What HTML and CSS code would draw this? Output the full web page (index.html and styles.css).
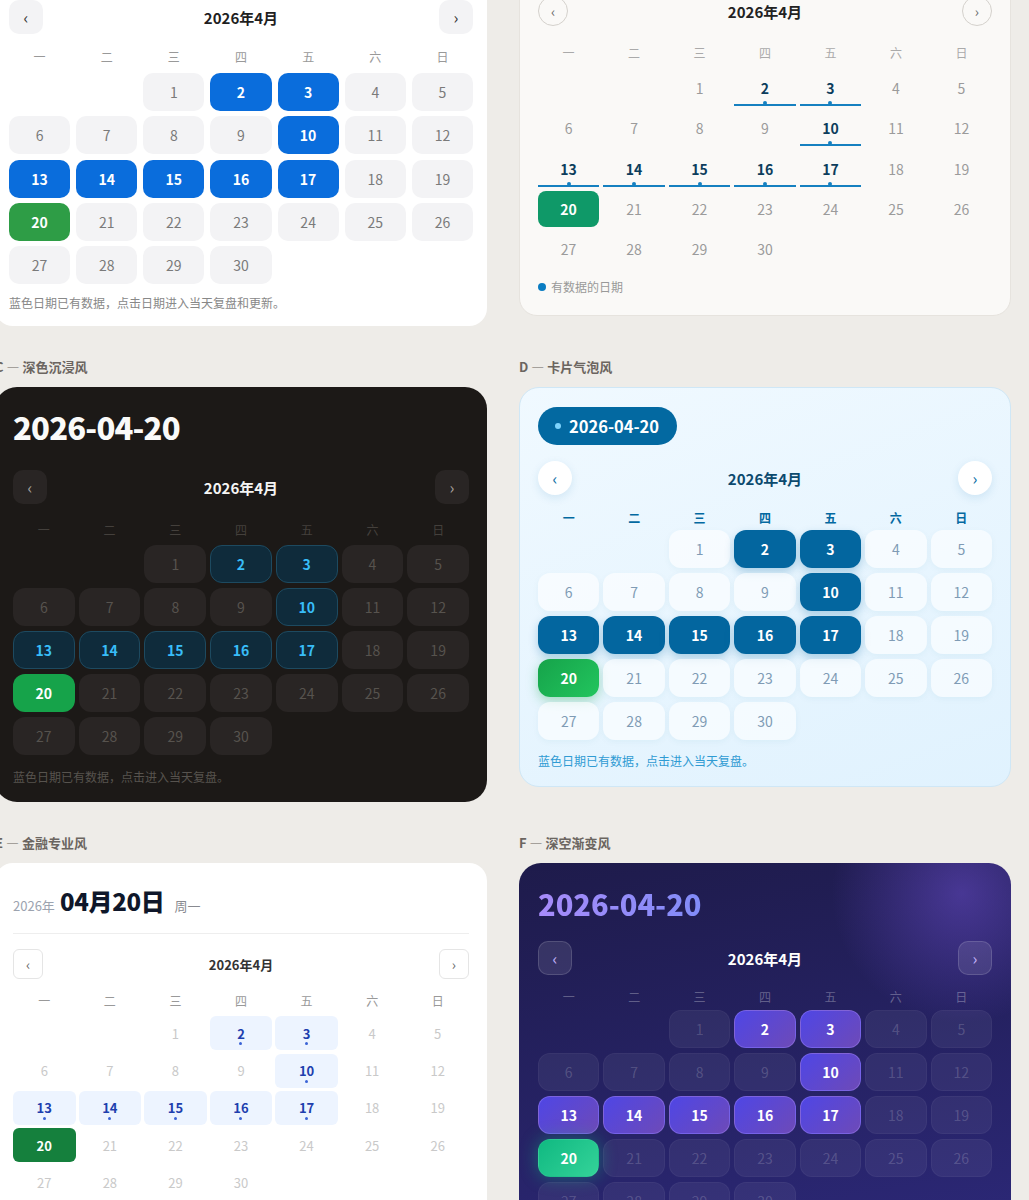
FILE: index.html
```html
<!DOCTYPE html>
<html lang="zh-CN">
<head>
    <meta charset="UTF-8">
    <meta name="viewport" content="width=device-width, initial-scale=1.0">
    <title>日历样式方案</title>
    <link rel="stylesheet" href="styles.css">
</head>
<body>
    <div class="page">
        <section class="demo">
            <div class="label">A — 简约卡片风</div>
            <div class="card cal-a">
                <div class="head"></div>
                <div class="nav"><button class="nav-btn">‹</button><span class="title">2026年4月</span><button class="nav-btn">›</button></div>
                <div class="week"><span>一</span><span>二</span><span>三</span><span>四</span><span>五</span><span>六</span><span>日</span></div>
                <div class="days"></div>
                <p class="note">蓝色日期已有数据，点击日期进入当天复盘和更新。</p>
            </div>
        </section>

        <section class="demo">
            <div class="label">B — 杂志线条风</div>
            <div class="card cal-b">
                <div class="head"></div>
                <div class="nav"><button class="nav-btn">‹</button><span class="title">2026年4月</span><button class="nav-btn">›</button></div>
                <div class="week"><span>一</span><span>二</span><span>三</span><span>四</span><span>五</span><span>六</span><span>日</span></div>
                <div class="days"></div>
                <div class="legend"><span class="dot"></span>有数据的日期</div>
            </div>
        </section>

        <section class="demo">
            <div class="label">C — 深色沉浸风</div>
            <div class="card cal-c">
                <div class="big">2026-04-20</div>
                <div class="nav"><button class="nav-btn">‹</button><span class="title">2026年4月</span><button class="nav-btn">›</button></div>
                <div class="week"><span>一</span><span>二</span><span>三</span><span>四</span><span>五</span><span>六</span><span>日</span></div>
                <div class="days"></div>
                <p class="note">蓝色日期已有数据，点击进入当天复盘。</p>
            </div>
        </section>

        <section class="demo">
            <div class="label">D — 卡片气泡风</div>
            <div class="card cal-d">
                <div class="pill"><span class="dot"></span>2026-04-20</div>
                <div class="nav"><button class="nav-btn">‹</button><span class="title">2026年4月</span><button class="nav-btn">›</button></div>
                <div class="week"><span>一</span><span>二</span><span>三</span><span>四</span><span>五</span><span>六</span><span>日</span></div>
                <div class="days"></div>
                <p class="note">蓝色日期已有数据，点击进入当天复盘。</p>
            </div>
        </section>

        <section class="demo">
            <div class="label">E — 金融专业风</div>
            <div class="card cal-e">
                <div class="date-e"><span class="yr">2026年</span><span class="md">04月20日</span><span class="wk">周一</span></div>
                <div class="nav"><button class="nav-btn">‹</button><span class="title">2026年4月</span><button class="nav-btn">›</button></div>
                <div class="week"><span>一</span><span>二</span><span>三</span><span>四</span><span>五</span><span>六</span><span>日</span></div>
                <div class="days"></div>
            </div>
        </section>

        <section class="demo">
            <div class="label">F — 深空渐变风</div>
            <div class="card cal-f">
                <div class="grad">2026-04-20</div>
                <div class="nav"><button class="nav-btn">‹</button><span class="title">2026年4月</span><button class="nav-btn">›</button></div>
                <div class="week"><span>一</span><span>二</span><span>三</span><span>四</span><span>五</span><span>六</span><span>日</span></div>
                <div class="days"></div>
            </div>
        </section>
    </div>
    <script>
        // April 2026 starts on a Wednesday
        var withData = [2, 3, 10, 13, 14, 15, 16, 17];
        document.querySelectorAll('.days').forEach(function (grid) {
            var html = '<span class="day blank"></span><span class="day blank"></span>';
            for (var d = 1; d <= 30; d++) {
                var cls = 'day';
                if (withData.indexOf(d) >= 0) cls += ' has';
                if (d === 20) cls += ' today';
                html += '<span class="' + cls + '">' + d + '</span>';
            }
            grid.innerHTML = html;
        });
    </script>
</body>
</html>
```

FILE: styles.css
```css
body {
    margin: 0;
    background: #eeece8;
    font-family: "Noto Sans CJK SC", "Noto Sans", sans-serif;
    color: #222;
}
.page {
    display: grid;
    grid-template-columns: 492px 492px;
    gap: 32px;
    align-items: start;
    margin: -87px 0 0 -5px;
}
.label {
    font-size: 13px;
    line-height: 18px;
    font-weight: 700;
    color: #6b6560;
    margin-bottom: 11px;
}
.card {
    border-radius: 20px;
    padding: 20px 18px;
}
.nav {
    display: flex;
    align-items: center;
    justify-content: space-between;
}
.nav-btn {
    width: 34px;
    height: 34px;
    padding: 0;
    border: 0;
    border-radius: 10px;
    font: inherit;
    font-size: 16px;
    cursor: pointer;
    display: flex;
    align-items: center;
    justify-content: center;
}
.title {
    font-size: 15px;
    font-weight: 700;
}
.week,
.days {
    display: grid;
    grid-template-columns: repeat(7, 1fr);
}
.week {
    text-align: center;
    font-size: 12px;
    line-height: 16px;
}
.day {
    display: flex;
    align-items: center;
    justify-content: center;
    font-size: 14px;
}
.day.has,
.day.today {
    font-weight: 700;
}
.note {
    margin: 0;
    font-size: 12px;
    line-height: 18px;
}

/* A */
.cal-a {
    background: #fff;
    border-radius: 18px;
    padding: 14px;
}
.cal-a .head {
    height: 30px;
    margin-bottom: 14px;
}
.cal-a .nav-btn {
    background: #f3f3f5;
    color: #333;
}
.cal-a .title {
    color: #1f1f1f;
}
.cal-a .week {
    margin-top: 15px;
    column-gap: 6px;
    color: #999;
}
.cal-a .days {
    margin-top: 8px;
    gap: 5.33px 6px;
    grid-auto-rows: 38px;
}
.cal-a .day {
    background: #f3f3f5;
    border-radius: 10px;
    color: #7a7a7a;
}
.cal-a .day.blank {
    background: none;
}
.cal-a .day.has {
    background: #0a6ddc;
    color: #fff;
}
.cal-a .day.today {
    background: #2e9d46;
    color: #fff;
}
.cal-a .note {
    margin-top: 10px;
    color: #888;
}

/* B */
.cal-b {
    background: #faf9f7;
    border: 1px solid #e6e3de;
    border-radius: 18px;
    padding: 19px 18px;
}
.cal-b .head {
    height: 22px;
    margin-bottom: 12px;
}
.cal-b .nav-btn {
    width: 30px;
    height: 30px;
    border: 1px solid #d4d1cc;
    border-radius: 50%;
    background: transparent;
    color: #666;
    font-size: 14px;
}
.cal-b .week {
    margin-top: 19px;
    column-gap: 4.3px;
    color: #aaa;
}
.cal-b .days {
    margin-top: 9px;
    gap: 4.33px;
    grid-auto-rows: 36px;
}
.cal-b .day {
    position: relative;
    border-radius: 8px;
    color: #9b9b9b;
}
.cal-b .day.has {
    color: #0c3d5c;
}
.cal-b .day.has::after {
    content: "";
    position: absolute;
    left: 0;
    right: 0;
    bottom: 0;
    height: 2px;
    background: #1580c0;
}
.cal-b .day.has::before {
    content: "";
    position: absolute;
    left: 50%;
    bottom: 1px;
    width: 4px;
    height: 4px;
    margin-left: -2px;
    border-radius: 50%;
    background: #1580c0;
}
.cal-b .day.today {
    background: #0f9968;
    color: #fff;
}
.legend {
    display: flex;
    align-items: center;
    gap: 5px;
    margin-top: 11px;
    font-size: 12px;
    line-height: 18px;
    color: #999;
}
.legend .dot {
    width: 8px;
    height: 8px;
    border-radius: 50%;
    background: #0a7cc2;
}

/* C */
.cal-c {
    background: #1c1917;
    border-radius: 22px;
    padding: 20px 18px 16px;
}
.cal-c .big {
    font-size: 31px;
    line-height: 40px;
    font-weight: 800;
    letter-spacing: -0.8px;
    color: #fafaf9;
}
.cal-c .nav {
    margin-top: 23px;
}
.cal-c .nav-btn {
    background: #292524;
    color: #a8a29e;
}
.cal-c .title {
    color: #f5f5f4;
}
.cal-c .week {
    margin-top: 18px;
    column-gap: 4px;
    color: #44403c;
}
.cal-c .days {
    margin-top: 7px;
    gap: 5px 4px;
    grid-auto-rows: 38px;
}
.cal-c .day {
    background: #292524;
    border-radius: 12px;
    color: #57534e;
}
.cal-c .day.blank {
    background: none;
}
.cal-c .day.has {
    background: #0f2b3b;
    border: 1px solid #1d4a60;
    color: #38bdf8;
}
.cal-c .day.today {
    background: #16a34a;
    color: #fff;
}
.cal-c .note {
    margin-top: 13px;
    color: #57534e;
}

/* D */
.cal-d {
    background: linear-gradient(160deg, #f0f9ff 0%, #e0f2fe 100%);
    border: 1px solid #cfe7f6;
    padding: 19px 18px 16px;
}
.pill {
    display: inline-flex;
    align-items: center;
    gap: 8px;
    height: 38px;
    padding: 0 18px 0 17px;
    border-radius: 19px;
    background: #0369a1;
    color: #fff;
    font-size: 16.5px;
    font-weight: 700;
}
.pill .dot {
    width: 6px;
    height: 6px;
    border-radius: 50%;
    background: #7dd3fc;
}
.cal-d .nav {
    margin-top: 16px;
}
.cal-d .nav-btn {
    background: #fff;
    border-radius: 50%;
    color: #0369a1;
    box-shadow: 0 3px 10px rgba(3, 105, 161, 0.12);
}
.cal-d .title {
    color: #0c4a6e;
}
.cal-d .week {
    margin-top: 15px;
    column-gap: 4px;
    color: #0369a1;
    font-weight: 600;
}
.cal-d .days {
    margin-top: 4px;
    gap: 5px 4px;
    grid-auto-rows: 38px;
}
.cal-d .day {
    background: rgba(255, 255, 255, 0.6);
    border-radius: 12px;
    color: #7f9bb5;
    box-shadow: 0 2px 6px rgba(14, 116, 144, 0.05);
}
.cal-d .day.blank {
    background: none;
    box-shadow: none;
}
.cal-d .day.has {
    background: #03669f;
    color: #fff;
    box-shadow: 0 4px 10px rgba(3, 105, 161, 0.28);
}
.cal-d .day.today {
    background: linear-gradient(135deg, #16a34a, #22c55e);
    color: #fff;
    box-shadow: 0 4px 12px rgba(22, 163, 74, 0.35);
}
.cal-d .note {
    margin-top: 12px;
    color: #2f9bd3;
}

/* E */
.cal-e {
    background: #fff;
    border-radius: 18px;
    padding: 19px 18px 24px;
}
.date-e {
    display: flex;
    align-items: baseline;
    line-height: 38px;
    padding-bottom: 8px;
    border-bottom: 1px solid #eee;
}
.date-e .yr {
    font-size: 13px;
    color: #9ca3af;
    margin-right: 5px;
}
.date-e .md {
    font-size: 24px;
    font-weight: 800;
    letter-spacing: -0.3px;
    color: #0f172a;
    margin-right: 10px;
}
.date-e .wk {
    font-size: 13px;
    color: #888a90;
}
.cal-e .nav {
    margin-top: 15px;
}
.cal-e .nav-btn {
    width: 30px;
    height: 30px;
    background: #fff;
    border: 1px solid #e5e5e5;
    border-radius: 6px;
    color: #666;
    font-size: 14px;
}
.cal-e .title {
    font-size: 13px;
    color: #333;
}
.cal-e .week {
    margin-top: 14px;
    column-gap: 3px;
    color: #999;
}
.cal-e .days {
    margin-top: 7px;
    gap: 3.3px 3px;
    grid-auto-rows: 34px;
}
.cal-e .day {
    position: relative;
    border-radius: 6px;
    font-size: 13px;
    color: #c9c9c9;
}
.cal-e .day.has {
    background: #edf4ff;
    color: #1e3fae;
}
.cal-e .day.has::after {
    content: "";
    position: absolute;
    left: 50%;
    bottom: 5px;
    width: 3px;
    height: 3px;
    margin-left: -1.5px;
    border-radius: 50%;
    background: #3b63d6;
}
.cal-e .day.today {
    background: #15803d;
    color: #fff;
}

/* F */
.cal-f {
    background:
        radial-gradient(circle at 90% 8%, rgba(110, 80, 210, 0.5), rgba(110, 80, 210, 0) 130px),
        linear-gradient(170deg, #1e1b4b, #2c2878);
    border-radius: 22px;
    padding: 20px 19px;
}
.grad {
    display: inline-block;
    font-size: 29px;
    line-height: 40px;
    font-weight: 800;
    background: linear-gradient(90deg, #a78bfa, #818cf8);
    -webkit-background-clip: text;
    background-clip: text;
    color: transparent;
}
.cal-f .nav {
    margin-top: 18px;
}
.cal-f .nav-btn {
    background: rgba(255, 255, 255, 0.1);
    border: 1px solid rgba(255, 255, 255, 0.14);
    color: #c4b5fd;
}
.cal-f .title {
    color: #fff;
}
.cal-f .week {
    margin-top: 14px;
    column-gap: 4px;
    color: rgba(255, 255, 255, 0.3);
}
.cal-f .days {
    margin-top: 5px;
    gap: 5px 4px;
    grid-auto-rows: 38px;
}
.cal-f .day {
    background: rgba(255, 255, 255, 0.06);
    border: 1px solid rgba(255, 255, 255, 0.04);
    border-radius: 12px;
    color: rgba(255, 255, 255, 0.18);
}
.cal-f .day.blank {
    background: none;
    border: 0;
}
.cal-f .day.has {
    background: linear-gradient(135deg, #4f46e5, #6d4ab8);
    border-color: rgba(167, 139, 250, 0.4);
    color: #fff;
}
.cal-f .day.today {
    background: linear-gradient(135deg, #10b981, #34d399);
    color: #fff;
    box-shadow: 0 0 18px rgba(16, 185, 129, 0.45);
}
```
